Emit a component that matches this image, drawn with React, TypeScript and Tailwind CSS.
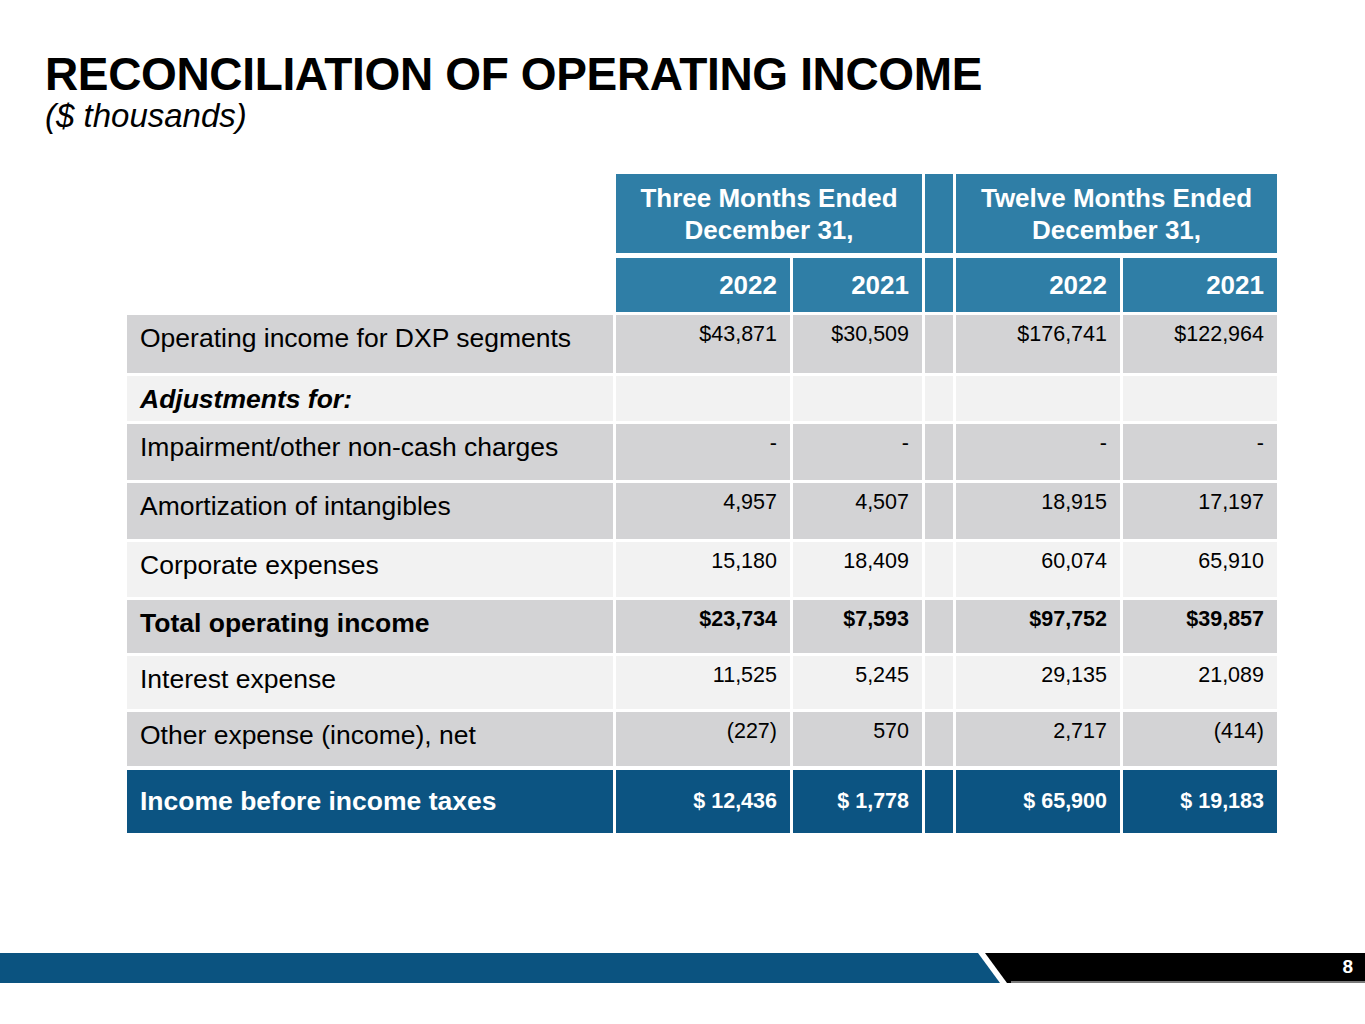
import React from "react";

type Row = {
  label: string;
  values: string[];
  tone: "gray" | "light" | "dark";
  bold?: boolean;
  italic?: boolean;
  height: string;
};

const ROWS: Row[] = [
  { label: "Operating income for DXP segments", values: ["$43,871", "$30,509", "$176,741", "$122,964"], tone: "gray", height: "h-[58px]" },
  { label: "Adjustments for:", values: ["", "", "", ""], tone: "light", bold: true, italic: true, height: "h-[45px]" },
  { label: "Impairment/other non-cash charges", values: ["-", "-", "-", "-"], tone: "gray", height: "h-[56px]" },
  { label: "Amortization of intangibles", values: ["4,957", "4,507", "18,915", "17,197"], tone: "gray", height: "h-[56px]" },
  { label: "Corporate expenses", values: ["15,180", "18,409", "60,074", "65,910"], tone: "light", height: "h-[55px]" },
  { label: "Total operating income", values: ["$23,734", "$7,593", "$97,752", "$39,857"], tone: "gray", bold: true, height: "h-[53px]" },
  { label: "Interest expense", values: ["11,525", "5,245", "29,135", "21,089"], tone: "light", height: "h-[53px]" },
  { label: "Other expense (income), net", values: ["(227)", "570", "2,717", "(414)"], tone: "gray", height: "h-[54px]" },
];

const COLS = "grid grid-cols-[486px_174px_129px_28px_164px_154px] gap-x-[3px]";

const toneBg = (tone: Row["tone"]) =>
  tone === "gray" ? "bg-[#d3d3d5]" : tone === "light" ? "bg-[#f2f2f2]" : "bg-[#0c5482]";

const App: React.FC = () => {
  return (
    <div className="h-[1024px] w-[1365px] bg-white flex flex-col font-['Liberation_Sans',Arial,sans-serif] text-black overflow-hidden">
      <div className="pl-[45px] pt-[49px]">
        <h1 className="text-[46px] font-bold leading-[50px] tracking-[-0.35px]">RECONCILIATION OF OPERATING INCOME</h1>
        <p className="text-[33px] italic leading-[36px] -mt-[1px]">($ thousands)</p>
      </div>

      <div className="ml-[127px] mt-[40px] w-[1150px] flex flex-col gap-y-[3px]">
        {/* period header */}
        <div className={`${COLS} h-[79px] text-white font-bold text-[26px] leading-[32px]`}>
          <div />
          <div className="col-span-2 bg-[#2f7ea6] flex items-center justify-center text-center">
            Three Months Ended
            <br />
            December 31,
          </div>
          <div className="bg-[#2f7ea6]" />
          <div className="col-span-2 bg-[#2f7ea6] flex items-center justify-center text-center">
            Twelve Months Ended
            <br />
            December 31,
          </div>
        </div>

        <div className={`${COLS} h-[54px] mt-[2px] text-white font-bold text-[26px]`}>
          <div />
          <div className="bg-[#2f7ea6] flex items-center justify-end pr-[13px]">2022</div>
          <div className="bg-[#2f7ea6] flex items-center justify-end pr-[13px]">2021</div>
          <div className="bg-[#2f7ea6]" />
          <div className="bg-[#2f7ea6] flex items-center justify-end pr-[13px]">2022</div>
          <div className="bg-[#2f7ea6] flex items-center justify-end pr-[13px]">2021</div>
        </div>

        {ROWS.map((row) => (
          <div key={row.label} className={`${COLS} ${row.height}`}>
            <div
              className={`${toneBg(row.tone)} pl-[13px] pt-[8px] text-[26.5px] leading-[30px] ${row.bold ? "font-bold" : ""} ${row.italic ? "italic" : ""}`}
            >
              {row.label}
            </div>
            {[0, 1].map((i) => (
              <div
                key={i}
                className={`${toneBg(row.tone)} pr-[13px] pt-[7px] text-right text-[21.5px] leading-[24px] ${row.bold ? "font-bold" : ""}`}
              >
                {row.values[i]}
              </div>
            ))}
            <div className={toneBg(row.tone)} />
            {[2, 3].map((i) => (
              <div
                key={i}
                className={`${toneBg(row.tone)} pr-[13px] pt-[7px] text-right text-[21.5px] leading-[24px] ${row.bold ? "font-bold" : ""}`}
              >
                {row.values[i]}
              </div>
            ))}
          </div>
        ))}

        <div className={`${COLS} h-[63px] mt-[1px] text-white font-bold`}>
          <div className="bg-[#0c5482] pl-[13px] flex items-center text-[26.5px]">Income before income taxes</div>
          <div className="bg-[#0c5482] pr-[13px] flex items-center justify-end text-[21.5px]">$ 12,436</div>
          <div className="bg-[#0c5482] pr-[13px] flex items-center justify-end text-[21.5px]">$ 1,778</div>
          <div className="bg-[#0c5482]" />
          <div className="bg-[#0c5482] pr-[13px] flex items-center justify-end text-[21.5px]">$ 65,900</div>
          <div className="bg-[#0c5482] pr-[13px] flex items-center justify-end text-[21.5px]">$ 19,183</div>
        </div>
      </div>

      {/* footer band */}
      <div className="mt-auto mb-[41px] h-[30px] flex">
        <div className="w-[977px] bg-[#0b5380]" />
        <svg width="34" height="30" viewBox="0 0 34 30" className="block shrink-0">
          <polygon points="0,0 1,0 23,30 0,30" fill="#0b5380" />
          <polygon points="8,0 34,0 34,30 30,30" fill="#000000" />
        </svg>
        <div className="flex-1 bg-black border-b-2 border-[#7a7a7a] flex items-center justify-end pr-[12px] text-white font-bold text-[19px]">
          8
        </div>
      </div>
    </div>
  );
};

export default App;
